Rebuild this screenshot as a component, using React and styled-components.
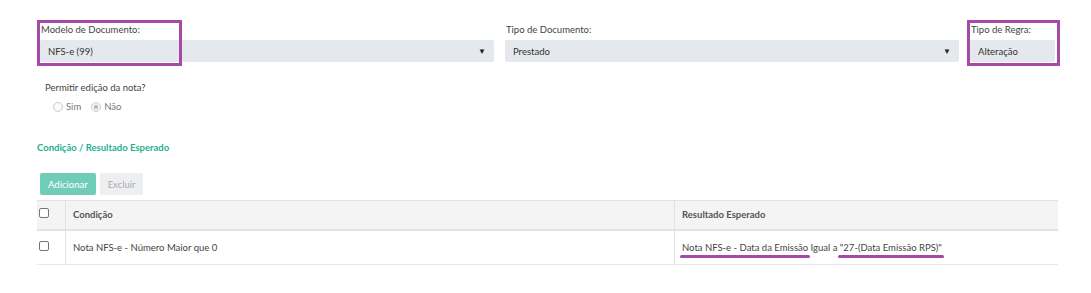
import React from "react";
import styled, { createGlobalStyle } from "styled-components";

const GlobalStyle = createGlobalStyle`
  body {
    margin: 0;
    background: #ffffff;
    font-family: Lato, "Open Sans", sans-serif;
    color: #333;
  }
`;

export default function App() {
  return (
    <>
      <GlobalStyle />
      <Page>
        {/* campos do topo */}
        <FieldsRow>
          <Field>
            <Label>Modelo de Documento:</Label>
            <Select>
              <span>NFS-e (99)</span>
              <Arrow>▼</Arrow>
            </Select>
            <Highlight $width={145} />
          </Field>
          <Field>
            <Label>Tipo de Documento:</Label>
            <Select>
              <span>Prestado</span>
              <Arrow>▼</Arrow>
            </Select>
          </Field>
          <Field>
            <Label>Tipo de Regra:</Label>
            <Select>
              <span>Alteração</span>
            </Select>
            <Highlight $width={93} />
          </Field>
        </FieldsRow>

        {/* permitir edição */}
        <EditArea>
          <Label>Permitir edição da nota?</Label>
          <RadioRow>
            <RadioItem>
              <Radio />
              Sim
            </RadioItem>
            <RadioItem>
              <Radio $checked />
              Não
            </RadioItem>
          </RadioRow>
        </EditArea>

        <SectionTitle>Condição / Resultado Esperado</SectionTitle>

        <Toolbar>
          <ButtonAdd>Adicionar</ButtonAdd>
          <ButtonDelete>Excluir</ButtonDelete>
        </Toolbar>

        <Table>
          <thead>
            <tr>
              <CheckCell as="th">
                <Checkbox />
              </CheckCell>
              <HeadCell>Condição</HeadCell>
              <HeadCell $w={369}>Resultado Esperado</HeadCell>
            </tr>
          </thead>
          <tbody>
            <tr>
              <CheckCell>
                <Checkbox />
              </CheckCell>
              <BodyCell>Nota NFS-e - Número Maior que 0</BodyCell>
              <BodyCell>
                <Mark>Nota NFS-e - Data da Emissão</Mark> Igual a{" "}
                <Mark>"27-(Data Emissão RPS)"</Mark>
              </BodyCell>
            </tr>
          </tbody>
        </Table>
      </Page>
    </>
  );
}

const Page = styled.div`
  width: 1021px;
  padding: 23px 0 0 37px;
  font-size: 9.5px;
`;

const FieldsRow = styled.div`
  display: grid;
  grid-template-columns: 454px 454px 85px;
  column-gap: 11px;
  padding-left: 3px;
`;

const Field = styled.div`
  position: relative;
  display: flex;
  flex-direction: column;
  gap: 4px;
`;

const Label = styled.div`
  font-size: 9.5px;
  color: #444;
  line-height: 13px;
  padding-left: 1px;
`;

const Select = styled.div`
  height: 22px;
  background: #e5e8ec;
  border-radius: 2px;
  display: flex;
  align-items: center;
  justify-content: space-between;
  padding: 0 8px;
  font-size: 9.5px;
  color: #333;
`;

const Arrow = styled.span`
  font-size: 8px;
  color: #222;
`;

const Highlight = styled.div`
  position: absolute;
  left: -3px;
  top: -3px;
  width: ${(p) => p.$width}px;
  height: 46px;
  border: 3px solid #a54aa8;
  box-sizing: border-box;
  pointer-events: none;
`;

const EditArea = styled.div`
  padding: 19px 0 0 7px;
  display: flex;
  flex-direction: column;
  gap: 7px;
`;

const RadioRow = styled.div`
  display: flex;
  gap: 10px;
  padding-left: 9px;
`;

const RadioItem = styled.label`
  display: flex;
  align-items: center;
  gap: 3px;
  color: #777;
  font-size: 9.5px;
`;

const Radio = styled.span`
  width: 10px;
  height: 10px;
  border-radius: 50%;
  border: 1px solid #cdcdcd;
  box-sizing: border-box;
  background: ${(p) =>
    p.$checked ? "radial-gradient(circle, #bdbdbd 35%, #f4f4f4 45%)" : "#fafafa"};
`;

const SectionTitle = styled.div`
  margin-top: 30px;
  color: #1fb08f;
  font-weight: bold;
  font-size: 9.5px;
`;

const Toolbar = styled.div`
  display: flex;
  gap: 4px;
  margin: 20px 0 5px 3px;
`;

const ButtonAdd = styled.button`
  border: none;
  height: 22px;
  padding: 0 8px;
  border-radius: 2px;
  background-color: #6fcdb7;
  color: white;
  font-family: inherit;
  font-size: 9.5px;
`;

const ButtonDelete = styled.button`
  border: none;
  height: 22px;
  padding: 0 8px;
  border-radius: 2px;
  background-color: #eeeff1;
  color: #aaa;
  font-family: inherit;
  font-size: 9.5px;
`;

const Table = styled.table`
  width: 1021px;
  border-collapse: collapse;
  font-size: 9.5px;
  border-top: 1px solid #e2e2e2;
  border-bottom: 1px solid #e8e8e8;

  thead tr {
    background: #f4f4f4;
    height: 29px;
    border-bottom: 2px solid #e2e2e2;
  }
  tbody tr {
    height: 35px;
  }
`;

const CheckCell = styled.td`
  width: 26px;
  padding: 0 0 0 2px;
  text-align: left;
  border-right: 1px solid #e2e2e2;
  vertical-align: middle;
`;

const Checkbox = styled.span`
  display: block;
  width: 10px;
  height: 10px;
  box-sizing: border-box;
  border: 1px solid #777;
  border-radius: 2px;
  background: #fff;
  margin-top: -3px;
`;

const HeadCell = styled.th`
  text-align: left;
  font-weight: bold;
  color: #555;
  padding: 0 7px;
  width: ${(p) => (p.$w ? `${p.$w}px` : "auto")};
  border-right: 1px solid #e2e2e2;
  &:last-child {
    border-right: none;
  }
`;

const BodyCell = styled.td`
  color: #444;
  padding: 0 7px;
  border-right: 1px solid #e2e2e2;
  &:last-child {
    border-right: none;
  }
`;

const Mark = styled.span`
  position: relative;
  &::after {
    content: "";
    position: absolute;
    left: -2px;
    right: -2px;
    bottom: -5px;
    height: 3px;
    border-radius: 2px;
    background: #a54aa8;
  }
`;
